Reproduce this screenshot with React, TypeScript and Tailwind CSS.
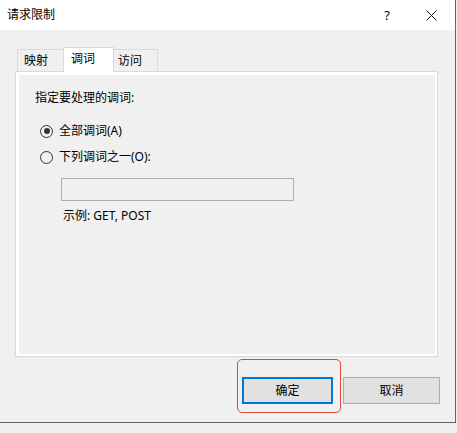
import React from "react";

const font = "font-['Noto_Sans','Noto_Sans_CJK_SC',sans-serif]";

function Radio({ checked, label }: { checked: boolean; label: string }) {
  return (
    <div className="flex items-center h-[16px] ml-[21px]">
      <div className="w-[13px] h-[13px] rounded-full border border-[#333333] bg-[#f0f0f0] flex items-center justify-center">
        {checked && <div className="w-[6px] h-[6px] rounded-full bg-[#333333]" />}
      </div>
      <span className="ml-[6px] text-[12px] leading-[16px] text-black">{label}</span>
    </div>
  );
}

export default function App() {
  return (
    <div className={`w-[457px] h-[433px] bg-[#f0f0f0] relative ${font}`}>
      <div className="w-[456px] h-[423px] border-r border-b border-[#646464] flex flex-col">
        {/* Title bar */}
        <div className="h-[30px] bg-white flex items-center shrink-0">
          <span className="ml-[7px] text-[12px] leading-[16px] text-black">请求限制</span>
          <span className="ml-auto mr-[36px] text-[13px] leading-[16px] text-black">?</span>
          <svg width="11" height="11" viewBox="0 0 11 11" className="mr-[18px]">
            <path d="M0.5 0.5 L10.5 10.5 M10.5 0.5 L0.5 10.5" stroke="#111" strokeWidth="1" />
          </svg>
        </div>

        {/* Body */}
        <div className="pl-[15px] pt-[17px] flex flex-col">
          {/* Tabs */}
          <div className="flex items-end h-[24px] relative z-10">
            <div className="ml-[2px] w-[46px] h-[22px] border-t border-l border-[#d9d9d9] bg-[#f0f0f0] flex items-center pl-[6px] text-[12px] leading-[16px] text-black">
              映射
            </div>
            <div className="w-[51px] h-[25px] -mb-px border-t border-l border-r border-[#d9d9d9] bg-white flex items-start pt-[3px] pl-[7px] text-[12px] leading-[16px] text-black">
              调词
            </div>
            <div className="w-[44px] h-[22px] border-t border-r border-[#d9d9d9] bg-[#f0f0f0] flex items-center pl-[4px] text-[12px] leading-[16px] text-black">
              访问
            </div>
          </div>

          {/* Panel */}
          <div className="w-[423px] h-[286px] border border-[#d9d9d9] bg-white">
            <div className="w-full h-full border-l-[3px] border-t-[3px] border-r-[2px] border-b-[2px] border-white bg-[#f0f0f0] flex flex-col">
              <div className="mt-[15px] ml-[16px] text-[12px] leading-[16px] text-black">指定要处理的调词:</div>
              <div className="mt-[17px]">
                <Radio checked label="全部调词(A)" />
              </div>
              <div className="mt-[10px]">
                <Radio checked={false} label="下列调词之一(O):" />
              </div>
              <div className="mt-[13px] ml-[42px] w-[233px] h-[23px] border border-[#adadad] bg-[#f0f0f0]" />
              <div className="mt-[7px] ml-[44px] text-[12px] leading-[16px] text-black">示例: GET, POST</div>
            </div>
          </div>

          {/* Buttons */}
          <div className="flex justify-end pr-[15px] mt-[20px] gap-[10px]">
            <button className="w-[91px] h-[27px] border-2 border-[#0078d7] bg-[#e1e1e1] text-[12px] leading-[16px] text-black">
              确定
            </button>
            <button className="w-[97px] h-[27px] border border-[#adadad] bg-[#e1e1e1] text-[12px] leading-[16px] text-black">
              取消
            </button>
          </div>
        </div>
      </div>

      {/* Red annotation highlight */}
      <div className="absolute left-[237px] top-[359px] w-[104px] h-[54px] border border-[#e0483a] rounded-[5px] pointer-events-none" />
    </div>
  );
}
